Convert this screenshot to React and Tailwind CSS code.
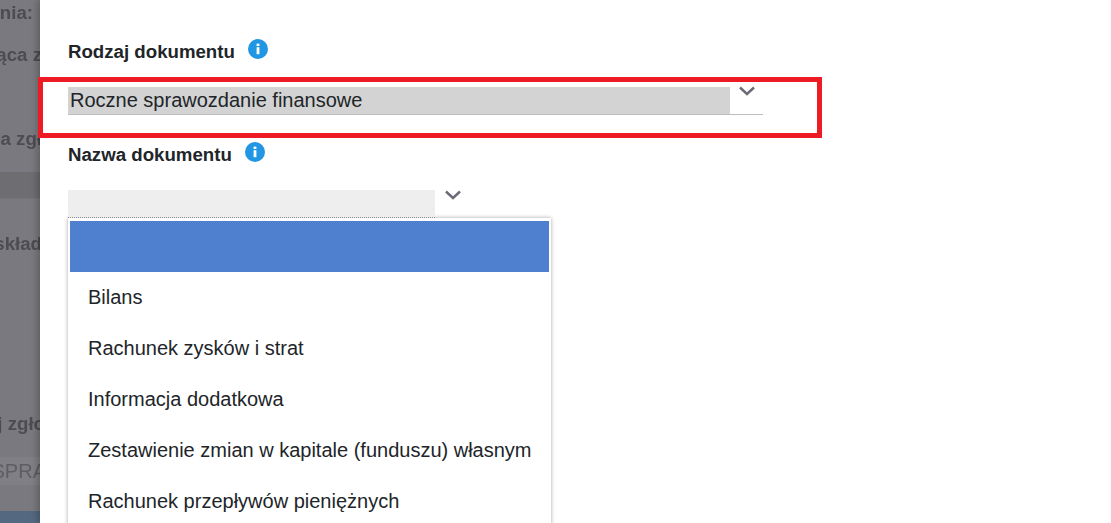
const OPTIONS = [
  'Bilans',
  'Rachunek zysków i strat',
  'Informacja dodatkowa',
  'Zestawienie zmian w kapitale (funduszu) własnym',
  'Rachunek przepływów pieniężnych',
];

function InfoIcon() {
  return (
    <svg width="20" height="20" viewBox="0 0 20 20" className="shrink-0">
      <circle cx="10" cy="10" r="10" fill="#2196e3" />
      <rect x="8.6" y="8.2" width="2.8" height="7" fill="#fff" />
      <rect x="8.6" y="4.6" width="2.8" height="2.4" fill="#fff" />
    </svg>
  );
}

function Chevron() {
  return (
    <svg width="16" height="10" viewBox="0 0 16 10" className="shrink-0">
      <path d="M1 1.5 L8 8 L15 1.5" fill="none" stroke="#6b6b78" strokeWidth="2.4" />
    </svg>
  );
}

function Backdrop() {
  return (
    <div className="w-[40px] h-[523px] shrink-0 overflow-hidden bg-[#7a797f] text-[#4d4c52] font-bold text-[18.67px] leading-[22px] whitespace-nowrap blur-[0.4px]">
      <div className="flex justify-end pt-[2px] pr-[7px] h-[44px]">nia:</div>
      <div className="flex justify-end -mr-[2px] h-[84px]">ąca z</div>
      <div className="flex justify-end -mr-[2px] h-[44px]">a zgł</div>
      <div className="h-[27px] bg-[#6e6d72] border-b border-[#76757a]" />
      <div className="flex justify-end -mr-[2px] pt-[34px] h-[214px]">skład</div>
      <div className="flex justify-end -mr-[5px] h-[44px]">j zgło</div>
      <div className="flex justify-end -mr-[6px] h-[28px] bg-[#807f85] text-[#5e5d63] font-normal text-[20px] leading-[28px]">SPRA</div>
      <div className="h-[26px]" />
      <div className="h-[12px] bg-[#54697f]" />
    </div>
  );
}

export default function App() {
  return (
    <div className="flex w-[1111px] h-[523px] overflow-hidden bg-white font-['Liberation_Sans',Arial,sans-serif] text-[#212529]">
      <Backdrop />
      <main className="relative flex-1 pl-[28px] pt-[39px] bg-white shadow-[-3px_0_6px_rgba(0,0,0,0.22)]">
        <div className="flex items-start gap-[13px] h-[38px]">
          <label className="font-bold text-[18.67px] leading-[26px]">Rodzaj dokumentu</label>
          <InfoIcon />
        </div>
        <div className="relative w-[695px] h-[38px] border-b border-[#bdbdbd] flex">
          <div className="absolute -left-[30px] top-0 w-[784px] h-[61px] border-[5px] border-[#ed1c24]" />
          <div className="w-[662px] h-[27px] mt-[10px] bg-[#d3d3d3] pl-[2px] text-[20px] leading-[27px]">Roczne sprawozdanie finansowe</div>
          <div className="ml-[9px] mt-[9px]"><Chevron /></div>
        </div>
        <div className="flex items-start gap-[13px] mt-[27px] h-[48px]">
          <label className="font-bold text-[18.67px] leading-[26px]">Nazwa dokumentu</label>
          <InfoIcon />
        </div>
        <div className="flex w-[400px] h-[28px]">
          <div className="w-[367px] h-[28px] bg-[#eeeeee] border-b border-dotted border-[#8a8a8a]" />
          <div className="ml-[10px]"><Chevron /></div>
        </div>
        <ul className="w-[483px] h-[400px] pt-[3px] px-[2px] bg-white shadow-[0_0_4px_rgba(0,0,0,0.35)] text-[20px] leading-[51px]">
          <li className="h-[51px] bg-[#4f7fcf]" />
          {OPTIONS.map(o => (
            <li key={o} className="h-[51px] pl-[18px] whitespace-nowrap">{o}</li>
          ))}
        </ul>
      </main>
    </div>
  );
}
